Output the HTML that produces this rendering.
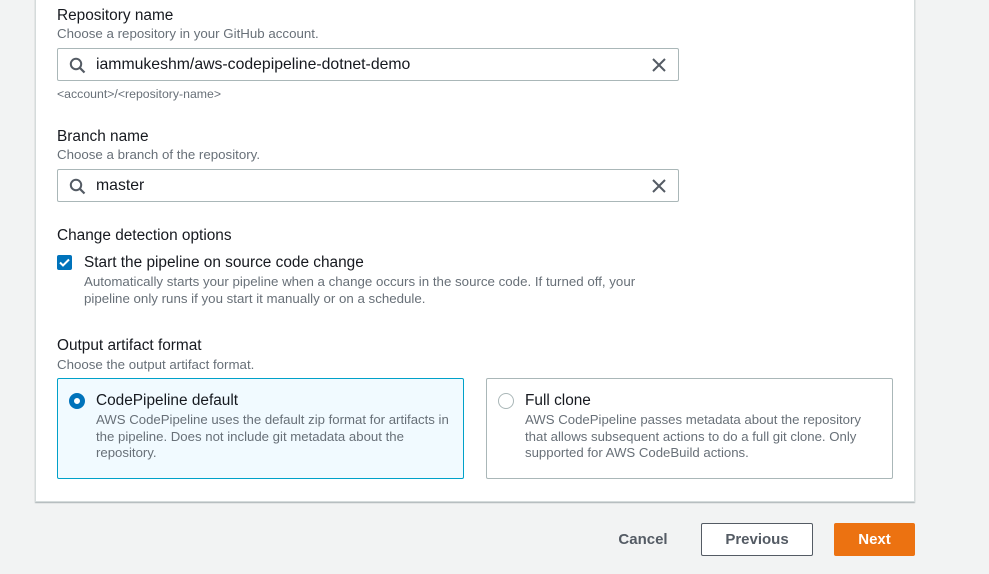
<!DOCTYPE html>
<html><head><meta charset="utf-8"><style>
*{margin:0;padding:0;box-sizing:border-box}
body{width:989px;height:574px;background:#f2f3f3;font-family:"Liberation Sans",sans-serif;position:relative;overflow:hidden;color:#16191f}
.panel{position:absolute;left:35px;top:-2px;width:880px;height:504px;background:#fff;border:1px solid #d5dbdb;box-shadow:0 1px 1px rgba(0,28,36,.3)}
.a{position:absolute;white-space:nowrap}
.lbl{font-size:15.4px;color:#16191f}
.desc{font-size:13.3px;color:#687078}
.inp{position:absolute;left:57px;width:622px;height:33px;border:1px solid #aab7b8;border-radius:2px;background:#fff}
.inp .t{position:absolute;left:38px;top:7px;font-size:15.8px}
.inp svg{position:absolute}
.card{position:absolute;top:378px;height:101px;border:1px solid #aab7b8;border-radius:2px;background:#fff}
.card .h{position:absolute;left:38px;top:13px;font-size:15.4px}
.card .d{position:absolute;left:38px;top:33px;font-size:13.2px;color:#687078;line-height:16.5px;white-space:normal;width:356px}
.btn{position:absolute;top:523px;height:33px;font-weight:bold;font-size:15px;text-align:center;line-height:33px;border-radius:2px}
</style></head><body>
<div class="panel"></div>
<div class="a lbl" style="left:57px;top:7px">Repository name</div>
<div class="a desc" style="left:57px;top:26px">Choose a repository in your GitHub account.</div>
<div class="inp" style="top:48px">
<svg style="left:11px;top:8px" width="17" height="17" viewBox="0 0 17 17"><circle cx="7" cy="7" r="5.2" fill="none" stroke="#545b64" stroke-width="2"/><path d="M11 11l4.5 4.5" stroke="#545b64" stroke-width="2.2"/></svg>
<div class="t">iammukeshm/aws-codepipeline-dotnet-demo</div>
<svg style="left:594px;top:9px" width="14" height="14" viewBox="0 0 14 14"><path d="M1 1l12 12M13 1L1 13" stroke="#545b64" stroke-width="2"/></svg>
</div>
<div class="a" style="left:57px;top:87px;font-size:12.3px;color:#687078">&lt;account&gt;/&lt;repository-name&gt;</div>
<div class="a lbl" style="left:57px;top:128px">Branch name</div>
<div class="a desc" style="left:57px;top:147px">Choose a branch of the repository.</div>
<div class="inp" style="top:169px">
<svg style="left:11px;top:8px" width="17" height="17" viewBox="0 0 17 17"><circle cx="7" cy="7" r="5.2" fill="none" stroke="#545b64" stroke-width="2"/><path d="M11 11l4.5 4.5" stroke="#545b64" stroke-width="2.2"/></svg>
<div class="t">master</div>
<svg style="left:594px;top:9px" width="14" height="14" viewBox="0 0 14 14"><path d="M1 1l12 12M13 1L1 13" stroke="#545b64" stroke-width="2"/></svg>
</div>
<div class="a lbl" style="left:57px;top:227px">Change detection options</div>
<div class="a" style="left:57px;top:255px;width:15px;height:15px;background:#0073bb;border-radius:2px"><svg width="15" height="15" viewBox="0 0 15 15"><path d="M3 7.5l3 3 6-6" fill="none" stroke="#fff" stroke-width="2"/></svg></div>
<div class="a" style="left:84px;top:254px;font-size:15.4px">Start the pipeline on source code change</div>
<div class="a desc" style="left:84px;top:273px;line-height:17px">Automatically starts your pipeline when a change occurs in the source code. If turned off, your<br>pipeline only runs if you start it manually or on a schedule.</div>
<div class="a lbl" style="left:57px;top:337px">Output artifact format</div>
<div class="a desc" style="left:57px;top:357px">Choose the output artifact format.</div>
<div class="card" style="left:57px;width:407px;border-color:#00a1c9;background:#f1faff">
<div class="a" style="left:11px;top:14px;width:16px;height:16px;border-radius:50%;border:5px solid #0073bb;background:#fff"></div>
<div class="h">CodePipeline default</div>
<div class="d">AWS CodePipeline uses the default zip format for artifacts in the pipeline. Does not include git metadata about the repository.</div>
</div>
<div class="card" style="left:486px;width:407px">
<div class="a" style="left:11px;top:14px;width:16px;height:16px;border-radius:50%;border:1.5px solid #aab7b8;background:#fff"></div>
<div class="h">Full clone</div>
<div class="d" style="width:350px">AWS CodePipeline passes metadata about the repository that allows subsequent actions to do a full git clone. Only supported for AWS CodeBuild actions.</div>
</div>
<div class="btn" style="left:610px;width:66px;color:#545b64">Cancel</div>
<div class="btn" style="left:701px;width:112px;border:1px solid #545b64;background:#fff;color:#545b64;line-height:31px">Previous</div>
<div class="btn" style="left:834px;width:81px;background:#ec7211;color:#fff">Next</div>
</body></html>
